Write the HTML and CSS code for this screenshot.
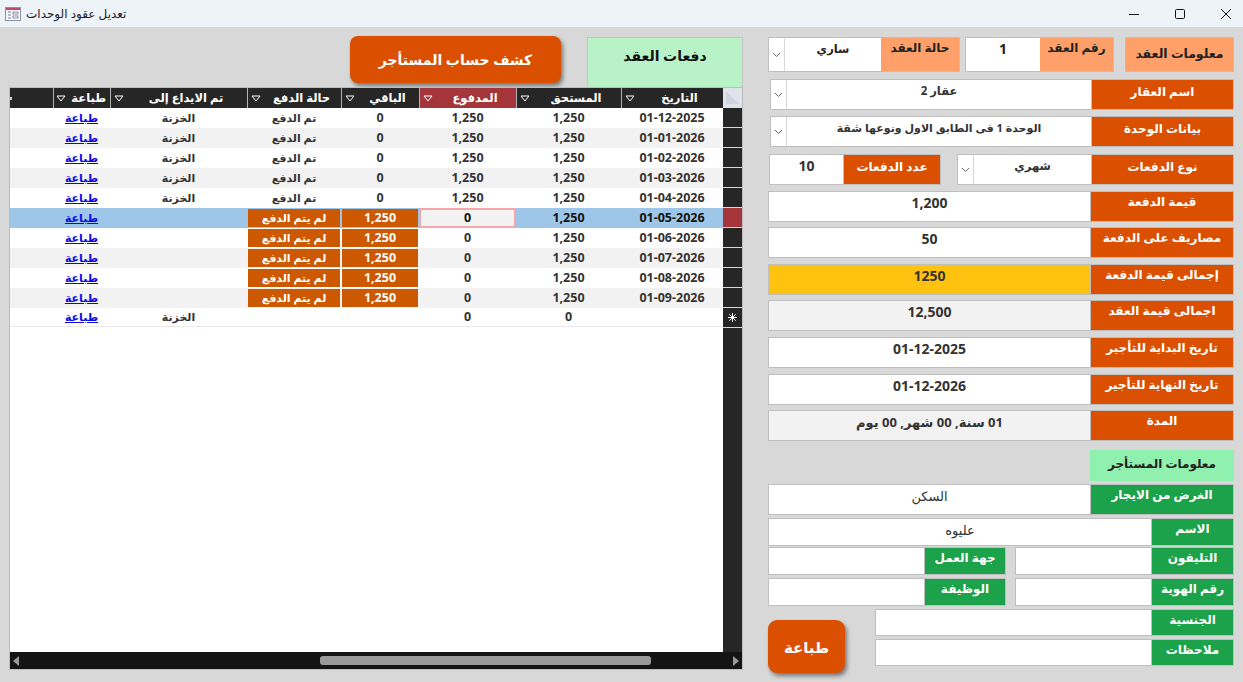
FILE: index.html
```html
<!DOCTYPE html>
<html lang="ar" dir="rtl">
<head>
    <meta charset="UTF-8">
    <meta name="viewport" content="width=device-width, initial-scale=1.0">
    <title>تعديل عقود الوحدات</title>
    <link rel="stylesheet" href="styles.css">
</head>

<body>
    <svg class="defs" width="0" height="0">
        <symbol id="tri" viewBox="0 0 10 7"><polygon points="1,1 9,1 5,6" fill="none" stroke="#ffffff"/></symbol>
        <symbol id="chev" viewBox="0 0 9 6"><path d="M1 1l3.5 3.5L8 1" fill="none" stroke="#666666"/></symbol>
    </svg>

    <header class="titlebar">
        <div class="title-left">
            <svg class="form-icon" width="16" height="14" viewBox="0 0 16 14">
                <rect x="0.5" y="0.5" width="15" height="13" fill="#f6f7fa" stroke="#8d93a6"/>
                <rect x="1" y="1" width="14" height="2" fill="#c2476a"/>
                <path d="M3 5h3M3 8h3M3 11h3" stroke="#7d8597"/>
                <rect x="8" y="5" width="5" height="2" fill="#fff" stroke="#6f7a93" stroke-width="0.8"/>
                <rect x="8" y="9" width="5" height="2" fill="#fff" stroke="#6f7a93" stroke-width="0.8"/>
            </svg>
            <span class="title-text">تعديل عقود الوحدات</span>
        </div>
        <div class="win-controls">
            <svg class="win-btn" width="12" height="12" viewBox="0 0 12 12"><path d="M1 6.5h10" stroke="#111"/></svg>
            <svg class="win-btn" width="12" height="12" viewBox="0 0 12 12"><rect x="1.5" y="1.5" width="9" height="9" rx="1" fill="none" stroke="#111"/></svg>
            <svg class="win-btn" width="12" height="12" viewBox="0 0 12 12"><path d="M1 1l10 10M11 1L1 11" stroke="#111"/></svg>
        </div>
    </header>

    <main class="main">
        <!-- بيانات العقد -->
        <section class="form-panel">
            <div class="row row-first">
                <div class="pair peach head-box"><span class="lbl dark big">معلومات العقد</span></div>
                <div class="pair pair-num">
                    <span class="lbl peach dark w-73">رقم العقد</span>
                    <span class="val num dark">1</span>
                </div>
                <div class="pair pair-state">
                    <span class="lbl peach dark w-78">حالة العقد</span>
                    <span class="val ar dark">ساري</span>
                    <span class="drop"><svg width="9" height="6"><use href="#chev"/></svg></span>
                </div>
            </div>
            <div class="row inset">
                <div class="pair grow">
                    <span class="lbl orange w-141">اسم العقار</span>
                    <span class="val ar">عقار 2</span>
                    <span class="drop"><svg width="9" height="6"><use href="#chev"/></svg></span>
                </div>
            </div>
            <div class="row inset">
                <div class="pair grow">
                    <span class="lbl orange w-141">بيانات الوحدة</span>
                    <span class="val small">الوحدة 1 فى الطابق الاول ونوعها شقة</span>
                    <span class="drop"><svg width="9" height="6"><use href="#chev"/></svg></span>
                </div>
            </div>
            <div class="row inset-pay">
                <div class="pair pair-type">
                    <span class="lbl orange w-141">نوع الدفعات</span>
                    <span class="val ar">شهري</span>
                    <span class="drop"><svg width="9" height="6"><use href="#chev"/></svg></span>
                </div>
                <div class="pair pair-count">
                    <span class="lbl orange w-96">عدد الدفعات</span>
                    <span class="val num">10</span>
                </div>
            </div>
            <div class="row"><div class="pair grow"><span class="lbl orange w-142">قيمة الدفعة</span><span class="val num">1,200</span></div></div>
            <div class="row"><div class="pair grow"><span class="lbl orange w-142">مصاريف على الدفعة</span><span class="val num">50</span></div></div>
            <div class="row"><div class="pair grow"><span class="lbl orange w-142">إجمالى قيمة الدفعة</span><span class="val num yellow">1250</span></div></div>
            <div class="row"><div class="pair grow"><span class="lbl orange w-142">اجمالى قيمة العقد</span><span class="val num gray">12,500</span></div></div>
            <div class="row"><div class="pair grow"><span class="lbl orange w-142">تاريخ البداية للتأجير</span><span class="val num">01-12-2025</span></div></div>
            <div class="row"><div class="pair grow"><span class="lbl orange w-142">تاريخ النهاية للتأجير</span><span class="val num">01-12-2026</span></div></div>
            <div class="row"><div class="pair grow"><span class="lbl orange w-142">المدة</span><span class="val gray">01 سنة, 00 شهر, 00 يوم</span></div></div>

            <div class="tenant-title">معلومات المستأجر</div>

            <div class="row"><div class="pair grow"><span class="lbl green w-142">الغرض من الايجار</span><span class="val plain">السكن</span></div></div>
            <div class="row row-27"><div class="pair grow"><span class="lbl green w-81">الاسم</span><span class="val plain">عليوه</span></div></div>
            <div class="row row-27 split">
                <div class="pair pair-half"><span class="lbl green w-81">التليفون</span><span class="val"></span></div>
                <div class="pair pair-job"><span class="lbl green w-80">جهة العمل</span><span class="val"></span></div>
            </div>
            <div class="row row-27 split">
                <div class="pair pair-half"><span class="lbl green w-81">رقم الهوية</span><span class="val"></span></div>
                <div class="pair pair-job"><span class="lbl green w-80">الوظيفة</span><span class="val"></span></div>
            </div>
            <div class="last-rows">
                <div class="notes">
                    <div class="pair note-row"><span class="lbl green w-81">الجنسية</span><span class="val"></span></div>
                    <div class="pair note-row"><span class="lbl green w-81">ملاحظات</span><span class="val"></span></div>
                </div>
                <button class="btn btn-print">طباعة</button>
            </div>
        </section>

        <!-- الدفعات -->
        <section class="left-panel">
            <div class="left-top">
                <div class="pay-title">دفعات العقد</div>
                <button class="btn btn-account">كشف حساب المستأجر</button>
            </div>

            <div class="grid">
                <div class="grid-body">
                    <div class="selectors">
                        <div class="corner"><svg width="15" height="15" viewBox="0 0 16 16"><polygon points="1,1 15,15 1,15" fill="#cfd5df"/></svg></div>
                        <div class="sel"></div><div class="sel"></div><div class="sel"></div><div class="sel"></div><div class="sel"></div>
                        <div class="sel sel-active"></div>
                        <div class="sel"></div><div class="sel"></div><div class="sel"></div><div class="sel"></div>
                        <div class="sel sel-new"><svg width="9" height="9" viewBox="0 0 9 9"><path d="M4.5 0v9M0 4.5h9M1.3 1.3l6.4 6.4M7.7 1.3L1.3 7.7" stroke="#ffffff"/></svg></div>
                    </div>
                    <div class="table-wrap">
                        <table class="pay-table">
                            <colgroup>
                                <col class="c-date"><col class="c-due"><col class="c-paid"><col class="c-rest"><col class="c-state"><col class="c-box"><col class="c-print"><col class="c-more">
                            </colgroup>
                            <thead>
                                <tr>
                                    <th><div class="th-in"><span>التاريخ</span><svg width="10" height="7"><use href="#tri"/></svg></div></th>
                                    <th><div class="th-in"><span>المستحق</span><svg width="10" height="7"><use href="#tri"/></svg></div></th>
                                    <th class="th-active"><div class="th-in"><span>المدفوع</span><svg width="10" height="7"><use href="#tri"/></svg></div></th>
                                    <th><div class="th-in"><span>الباقي</span><svg width="10" height="7"><use href="#tri"/></svg></div></th>
                                    <th><div class="th-in"><span>حالة الدفع</span><svg width="10" height="7"><use href="#tri"/></svg></div></th>
                                    <th><div class="th-in"><span>تم الايداع إلى</span><svg width="10" height="7"><use href="#tri"/></svg></div></th>
                                    <th><div class="th-in"><span>طباعة</span><svg width="10" height="7"><use href="#tri"/></svg></div></th>
                                    <th class="th-more"><i class="more-mark"></i></th>
                                </tr>
                            </thead>
                            <tbody>
                                <tr><td>01-12-2025</td><td>1,250</td><td>1,250</td><td>0</td><td class="ar">تم الدفع</td><td class="ar">الخزنة</td><td class="ar"><a href="#">طباعة</a></td><td></td></tr>
                                <tr><td>01-01-2026</td><td>1,250</td><td>1,250</td><td>0</td><td class="ar">تم الدفع</td><td class="ar">الخزنة</td><td class="ar"><a href="#">طباعة</a></td><td></td></tr>
                                <tr><td>01-02-2026</td><td>1,250</td><td>1,250</td><td>0</td><td class="ar">تم الدفع</td><td class="ar">الخزنة</td><td class="ar"><a href="#">طباعة</a></td><td></td></tr>
                                <tr><td>01-03-2026</td><td>1,250</td><td>1,250</td><td>0</td><td class="ar">تم الدفع</td><td class="ar">الخزنة</td><td class="ar"><a href="#">طباعة</a></td><td></td></tr>
                                <tr><td>01-04-2026</td><td>1,250</td><td>1,250</td><td>0</td><td class="ar">تم الدفع</td><td class="ar">الخزنة</td><td class="ar"><a href="#">طباعة</a></td><td></td></tr>
                                <tr class="tr-active"><td>01-05-2026</td><td>1,250</td><td class="td-focus">0</td><td class="td-late">1,250</td><td class="td-late ar">لم يتم الدفع</td><td></td><td class="ar"><a href="#">طباعة</a></td><td></td></tr>
                                <tr><td>01-06-2026</td><td>1,250</td><td>0</td><td class="td-late">1,250</td><td class="td-late ar">لم يتم الدفع</td><td></td><td class="ar"><a href="#">طباعة</a></td><td></td></tr>
                                <tr><td>01-07-2026</td><td>1,250</td><td>0</td><td class="td-late">1,250</td><td class="td-late ar">لم يتم الدفع</td><td></td><td class="ar"><a href="#">طباعة</a></td><td></td></tr>
                                <tr><td>01-08-2026</td><td>1,250</td><td>0</td><td class="td-late">1,250</td><td class="td-late ar">لم يتم الدفع</td><td></td><td class="ar"><a href="#">طباعة</a></td><td></td></tr>
                                <tr><td>01-09-2026</td><td>1,250</td><td>0</td><td class="td-late">1,250</td><td class="td-late ar">لم يتم الدفع</td><td></td><td class="ar"><a href="#">طباعة</a></td><td></td></tr>
                                <tr class="tr-new"><td></td><td>0</td><td>0</td><td></td><td></td><td class="ar">الخزنة</td><td class="ar"><a href="#">طباعة</a></td><td></td></tr>
                            </tbody>
                        </table>
                    </div>
                </div>
                <div class="hscroll">
                    <svg width="8" height="10" viewBox="0 0 8 10"><polygon points="7,0 7,10 1,5" fill="#9a9a9a"/></svg>
                    <div class="track"><div class="thumb"></div></div>
                    <svg width="8" height="10" viewBox="0 0 8 10"><polygon points="1,0 1,10 7,5" fill="#9a9a9a"/></svg>
                </div>
            </div>
        </section>
    </main>
</body>
</html>
```

FILE: styles.css
```css
* {
    box-sizing: border-box;
}

html, body {
    margin: 0;
    height: 100%;
}

body {
    width: 1243px;
    height: 682px;
    overflow: hidden;
    background-color: #d8d8d8;
    color: #333333;
    font-family: "Noto Sans", "DejaVu Sans", sans-serif;
    font-size: 13px;
    font-weight: 700;
}

.defs {
    display: block;
    height: 0;
}

/* title bar */
.titlebar {
    direction: ltr;
    height: 27px;
    display: flex;
    justify-content: space-between;
    align-items: center;
    background-color: #eef3f8;
}

.title-left {
    display: flex;
    align-items: center;
    gap: 5px;
    padding-left: 5px;
}

.title-text {
    font-size: 12px;
    font-weight: 400;
    color: #222222;
}

.win-controls {
    display: flex;
    gap: 34px;
    padding-right: 11px;
}

/* main */
.main {
    display: flex;
    height: 655px;
    padding: 0 9px;
    gap: 25px;
}

/* right form */
.form-panel {
    width: 466px;
    padding-top: 10px;
    display: grid;
    grid-template-columns: 1fr;
    grid-template-rows: 42px 37px 38px 37px 36px 37px 36px 37px 37px 36px 40px 34px 34px 29px 31px 31px auto;
}

.row {
    height: 31px;
    display: flex;
    gap: 5px;
}

.row-first {
    height: 35px;
}

.row-27 {
    height: 28px;
}

.inset {
    padding-left: 2px;
}

.inset-pay {
    padding-left: 1px;
    gap: 16px;
}

.split {
    gap: 9px;
}

.pair {
    display: flex;
    height: 100%;
    border: 1px solid #bfbfbf;
    background-color: #ffffff;
}

.grow {
    flex: 1;
}

.head-box {
    width: 109px;
    margin-left: 6px;
}

.head-box .lbl {
    flex: 1;
    padding-top: 7px;
}

.pair-num {
    width: 149px;
}

.pair-state {
    flex: 1;
}

.pair-type {
    width: 277px;
}

.pair-count {
    flex: 1;
}

.pair-half {
    width: 219px;
}

.pair-job {
    flex: 1;
}

.lbl {
    flex: none;
    padding-top: 1px;
    color: #ffffff;
    text-align: center;
    font-size: 12px;
    line-height: 18px;
}

.inset .lbl,
.inset-pay .lbl {
    padding-top: 3px;
}

.big {
    font-size: 12.5px;
}

.dark {
    color: #222222;
}

.orange {
    background-color: #da5000;
}

.peach {
    background-color: #ffa06a;
}

.green {
    background-color: #1ba24a;
}

.w-73 { width: 73px; }
.w-78 { width: 78px; }
.w-80 { width: 80px; }
.w-81 { width: 81px; }
.w-96 { width: 96px; }
.w-141 { width: 141px; }
.w-142 { width: 142px; }

.val {
    flex: 1;
    padding-top: 2px;
    text-align: center;
    font-size: 13px;
    line-height: 18px;
    border-right: 1px solid #bfbfbf;
}

.val.num {
    font-size: 14px;
}

.val.ar {
    font-size: 11.5px;
}

.val.small {
    font-size: 11px;
}

.row-first .val {
    border-right: 0;
}

.plain {
    font-weight: 400;
}

.yellow {
    background-color: #ffc20e;
}

.gray {
    background-color: #f2f2f2;
}

.drop {
    flex: none;
    width: 16px;
    display: flex;
    align-items: center;
    justify-content: center;
    background-color: #ffffff;
    border-right: 1px solid #d8d8d8;
}

.tenant-title {
    width: 144px;
    height: 31px;
    padding-top: 4px;
    background-color: #90f0ae;
    color: #222222;
    text-align: center;
    font-size: 12px;
    line-height: 20px;
}

.last-rows {
    display: flex;
    justify-content: space-between;
    align-items: flex-start;
}

.notes {
    width: 359px;
    display: flex;
    flex-direction: column;
    gap: 3px;
}

.note-row {
    height: 27px;
}

.btn {
    border: 0;
    color: #ffffff;
    background-color: #da5000;
    font-family: inherit;
    font-weight: 700;
    box-shadow: 2px 3px 4px rgba(0, 0, 0, 0.45);
}

.btn-print {
    width: 77px;
    height: 53px;
    margin-top: 11px;
    border-radius: 9px;
    font-size: 15px;
}

/* left side */
.left-panel {
    width: 734px;
    display: flex;
    flex-direction: column;
    padding-top: 10px;
}

.left-top {
    height: 50px;
    display: flex;
    gap: 26px;
}

.pay-title {
    width: 156px;
    height: 50px;
    padding-top: 8px;
    background-color: #baf2c8;
    border: 1px solid #c4c4c4;
    border-bottom: 0;
    color: #111111;
    text-align: center;
    font-size: 14px;
}

.btn-account {
    width: 211px;
    height: 47px;
    margin-top: -1px;
    border-radius: 8px;
    font-size: 14px;
}

.grid {
    height: 583px;
    display: flex;
    flex-direction: column;
    border: 1px solid #bdbdbd;
    background-color: #ffffff;
}

.grid-body {
    flex: 1;
    display: flex;
    min-height: 0;
}

.selectors {
    flex: none;
    width: 19px;
    background-color: #262626;
}

.corner {
    height: 20px;
    padding: 2px;
    background-color: #dfe3ea;
}

.sel {
    height: 20px;
    border-bottom: 1px solid #d8d8d8;
}

.sel-active {
    background-color: #a4353a;
}

.sel-new {
    display: flex;
    align-items: center;
    justify-content: center;
}

.table-wrap {
    flex: 1;
    min-width: 0;
}

.pay-table {
    width: 100%;
    table-layout: fixed;
    border-collapse: separate;
    border-spacing: 0;
    font-size: 12.5px;
}

.c-date { width: 102px; }
.c-due { width: 105px; }
.c-paid { width: 97px; }
.c-rest { width: 78px; }
.c-state { width: 94px; }
.c-box { width: 137px; }
.c-print { width: 57px; }
.c-more { width: 43px; }

.pay-table th {
    height: 20px;
    padding: 0;
    background-color: #262626;
    color: #ffffff;
    font-size: 11.5px;
    font-weight: 700;
    border-left: 1px solid #b5b5b5;
}

.th-in {
    display: flex;
    align-items: center;
    padding: 0 4px 0 3px;
}

.th-in span {
    flex: 1;
    text-align: center;
    line-height: 16px;
    white-space: nowrap;
}

.th-in svg {
    flex: none;
    margin-right: 5px;
}

.pay-table .th-active {
    background-color: #a4353a;
}

.pay-table .th-more {
    border-left: 0;
}

.more-mark {
    display: block;
    width: 2px;
    height: 3px;
    margin-right: auto;
    background-color: #cccccc;
}

.pay-table td {
    height: 20px;
    padding: 0;
    text-align: center;
    line-height: 14px;
    white-space: nowrap;
    color: #333333;
}

.pay-table td.ar {
    font-size: 11px;
}

.pay-table tbody tr:nth-child(even) {
    background-color: #f2f2f2;
}

.pay-table a {
    color: #0a0ae6;
}

.pay-table .tr-active {
    background-color: #9dc6e9 !important;
}

.pay-table .tr-active td {
    color: #111111;
}

.pay-table .td-focus {
    background-color: #f2f2f2;
    border: 2px solid #f4a6ab;
}

.pay-table .td-late {
    background-color: #cc5800;
    background-clip: padding-box;
    border: 1px solid transparent;
    color: #ffffff;
}

.pay-table .tr-active .td-late {
    color: #ffffff;
}

.pay-table .tr-new td {
    height: 19px;
    border-bottom: 1px solid #eceae4;
}

.hscroll {
    direction: ltr;
    height: 17px;
    flex: none;
    display: flex;
    align-items: center;
    background-color: #141414;
    padding: 0 2px;
}

.track {
    flex: 1;
}

.thumb {
    width: 331px;
    height: 9px;
    margin-left: 300px;
    border-radius: 3px;
    background-color: #9a9a9a;
}
```
